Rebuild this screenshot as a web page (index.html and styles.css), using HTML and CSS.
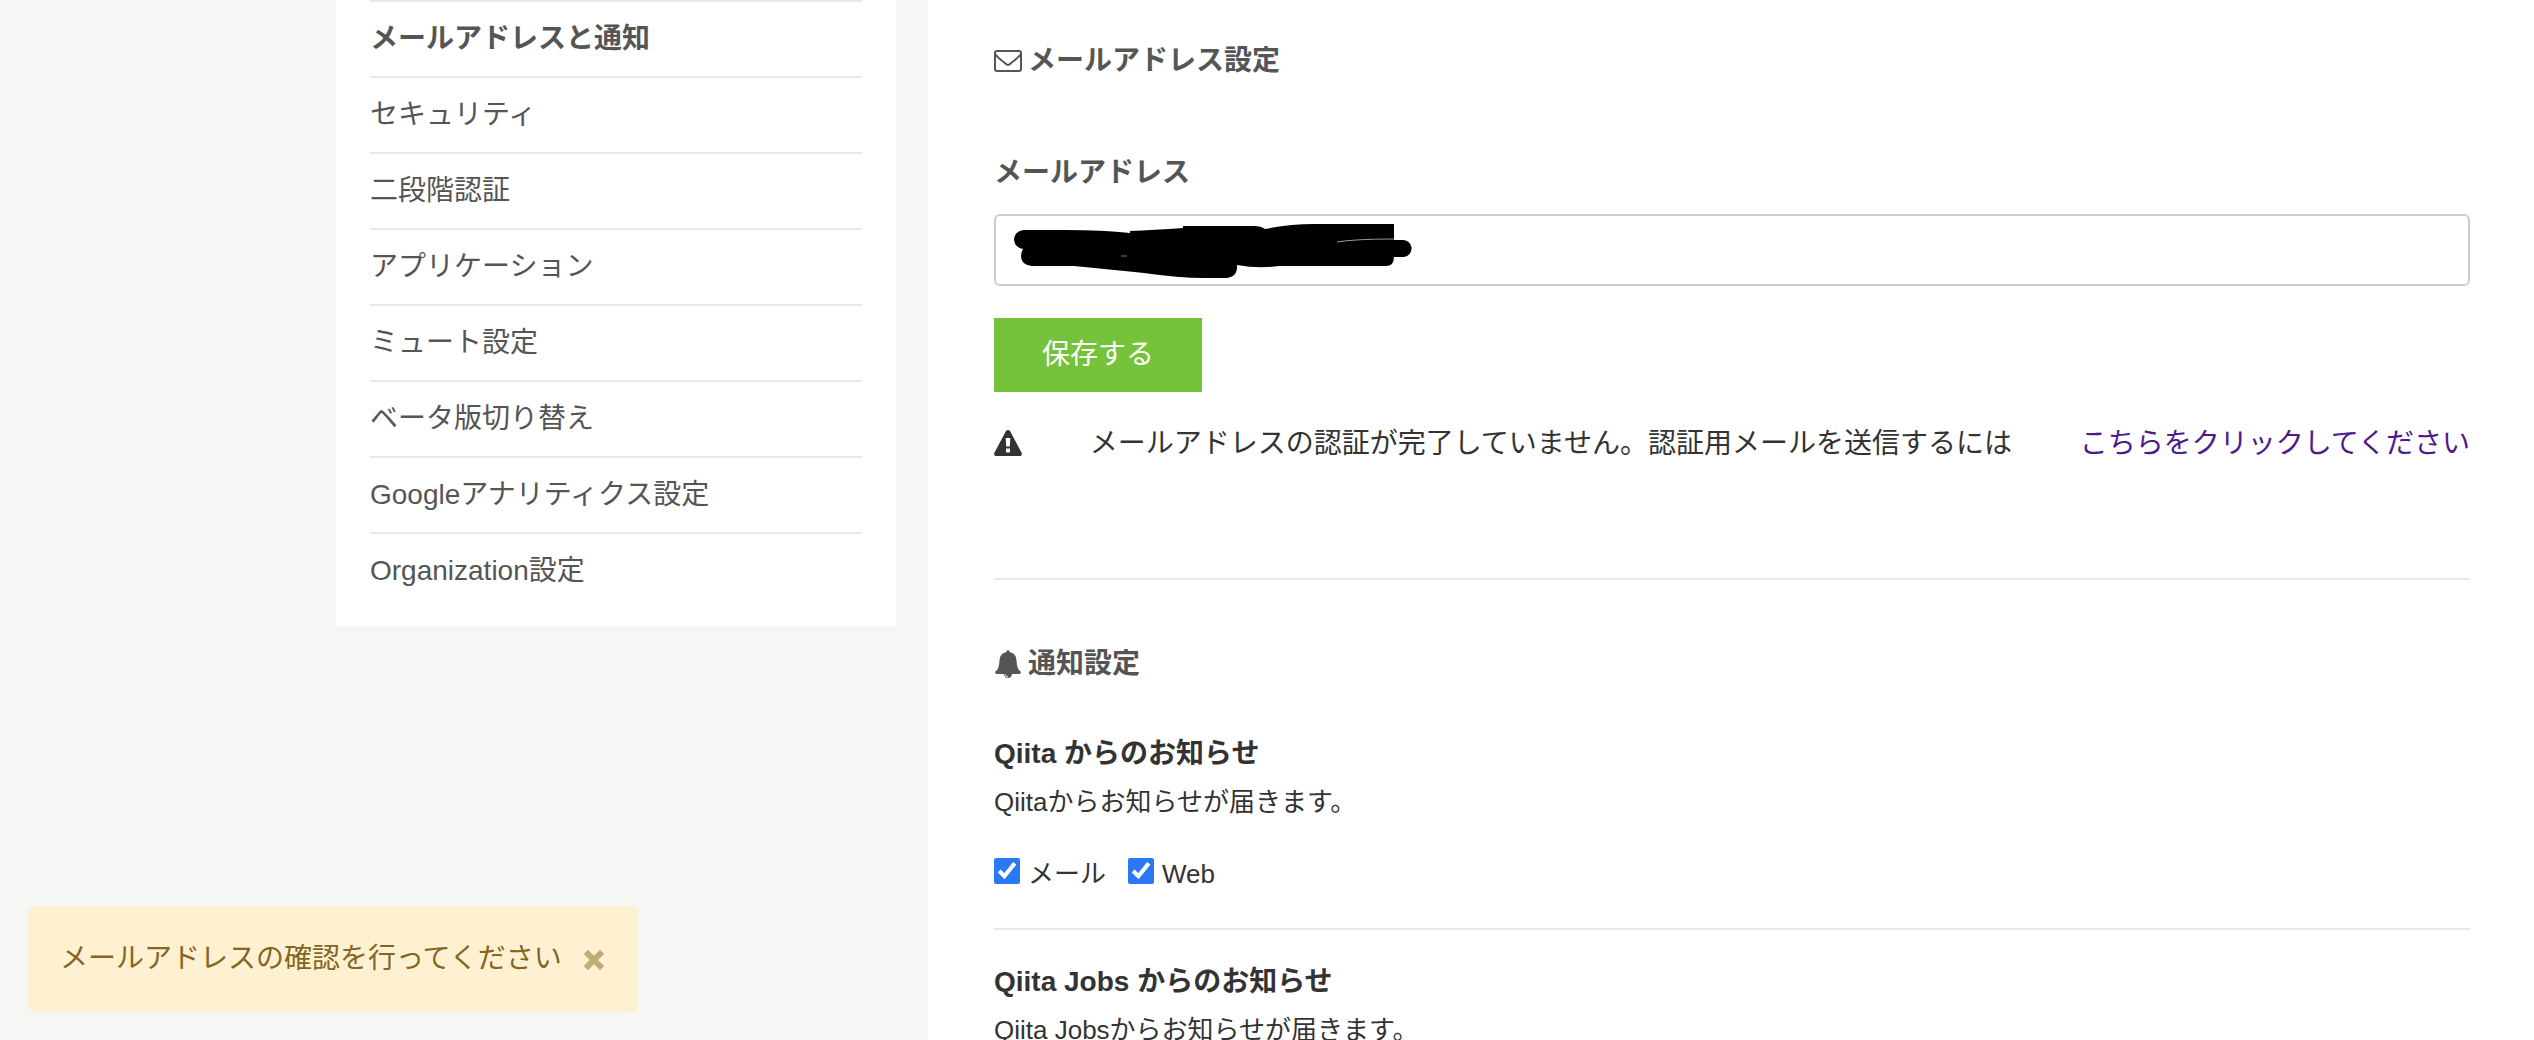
FILE: index.html
```html
<!DOCTYPE html>
<html lang="ja">
<head>
    <meta charset="utf-8">
    <title>メールアドレスと通知 - Qiita</title>
    <link rel="stylesheet" href="styles.css">
</head>
<body>
    <div class="page">
        <nav class="sidebar">
            <ul class="menu">
                <li><a href="#" class="active">メールアドレスと通知</a></li>
                <li><a href="#">セキュリティ</a></li>
                <li><a href="#">二段階認証</a></li>
                <li><a href="#">アプリケーション</a></li>
                <li><a href="#">ミュート設定</a></li>
                <li><a href="#">ベータ版切り替え</a></li>
                <li><a href="#">Googleアナリティクス設定</a></li>
                <li><a href="#">Organization設定</a></li>
            </ul>
        </nav>
        <main class="content">
            <section class="email">
                <h2 class="section-title">
                    <svg class="icon" viewBox="0 0 28 28" fill="none" stroke="currentColor" stroke-width="2">
                        <rect x="1" y="4" width="26" height="20" rx="2"/>
                        <path d="M1 7C3 10 6 12 9 14.500C11 16 12.500 18 14 18C15.500 18 17 16 19 14.500C22 12 25 10 27 7"/>
                    </svg>
                    メールアドレス設定
                </h2>
                <form>
                    <label class="field-label" for="email">メールアドレス</label>
                    <div class="field">
                        <input type="email" id="email" class="text-input">
                        <svg class="redaction" viewBox="0 0 400 56" width="400" height="56">
                            <path d="M10 6H50Q90 6 116 9V7Q140 6 169 4V2H240Q247 2 251 5Q275 0 300 0H380V16H388A8 8 0 0 1 390 33H380Q380 42 372 42H265Q245 45 223 41Q224 54 210 54H190Q165 54 130 49Q90 45 60 42H18Q7 41 7 32Q7 28 9 25Q0 23 0 15Q1 7 10 6Z"/>
                            <path d="M323 18Q340 15 380 15" fill="none" stroke="#999"/>
                            <path d="M107 32L113 32" fill="none" stroke="#777"/>
                        </svg>
                    </div>
                    <button type="submit" class="btn">保存する</button>
                </form>
                <div class="warning">
                    <svg class="icon" viewBox="0 0 28 28">
                        <path fill="currentColor" fill-rule="evenodd" d="M14 0Q15.200 0 16 1L27.700 23Q28.500 26 26 26H2Q-.5 26 .3 23L12 1Q12.800 0 14 0ZM11.700 8L12.200 16.500H15.800L16.300 8ZM12 18.500V22.500H16V18.500Z"/>
                    </svg>
                    <span>メールアドレスの認証が完了していません。認証用メールを送信するには</span>
                    <a href="#">こちらをクリックしてください</a>
                </div>
            </section>
            <section class="notifications">
                <h2 class="section-title">
                    <svg class="icon" viewBox="0 0 28 28" fill="currentColor">
                        <path d="M14 0Q15.500 0 15.500 2Q22 3.500 22.500 10Q22.500 19 27 22Q27 24 25 24H18Q17.500 28 14 28Q10.500 28 10 24H3Q1 24 1 22Q5.500 19 5.500 10Q6 3.500 12.500 2Q12.500 0 14 0Z"/>
                        <path d="M11.500 24.500Q11.800 26.700 14 27" fill="none" stroke="#fff" stroke-width="1"/>
                    </svg>
                    通知設定
                </h2>
                <div class="notice">
                    <h3>Qiita からのお知らせ</h3>
                    <p>Qiitaからお知らせが届きます。</p>
                    <div class="checks">
                        <label><input type="checkbox" checked>メール</label>
                        <label><input type="checkbox" checked>Web</label>
                    </div>
                </div>
                <div class="notice">
                    <h3>Qiita Jobs からのお知らせ</h3>
                    <p>Qiita Jobsからお知らせが届きます。</p>
                </div>
            </section>
        </main>
    </div>
    <div class="toast">
        <span>メールアドレスの確認を行ってください</span>
        <button type="button" class="toast-close" aria-label="閉じる">
            <svg viewBox="0 0 20 20" width="20" height="20">
                <path d="M4 4L16 16M16 4L4 16" stroke="currentColor" stroke-width="6" stroke-linecap="square"/>
            </svg>
        </button>
    </div>
</body>
</html>
```
FILE: styles.css
```css
* {
    box-sizing: border-box;
}
body {
    margin: 0;
    height: 100vh;
    overflow: hidden;
    background: #f6f6f4;
    color: #333;
    font-family: "Liberation Sans", "Noto Sans CJK JP", sans-serif;
    font-size: 28px;
    line-height: 40px;
}
h2, h3, p, ul {
    margin: 0;
    padding: 0;
}
.page {
    display: flex;
    align-items: flex-start;
    gap: 32px;
    padding-left: 336px;
}
.sidebar {
    flex: 0 0 560px;
    padding: 0 34px 18px;
    background: #fff;
}
.menu {
    list-style: none;
}
.menu li {
    border-top: 2px solid #e8e8e8;
    padding: 17px 0;
}
.menu a {
    display: block;
    color: #555;
    text-decoration: none;
}
.menu .active {
    font-weight: bold;
}
.content {
    flex: 1;
    min-height: 100vh;
    padding: 41px 64px 0 66px;
    background: #fff;
}
.section-title {
    display: flex;
    align-items: center;
    gap: 6px;
    color: #555;
    font-size: 28px;
}
.icon {
    flex: none;
    width: 28px;
    height: 28px;
}
.email {
    padding-bottom: 114px;
    border-bottom: 2px solid #e8e8e8;
}
.field-label {
    display: block;
    margin: 72px 0 21px;
    color: #555;
    font-weight: bold;
}
.field {
    position: relative;
}
.text-input {
    display: block;
    width: 100%;
    height: 72px;
    padding: 0 20px;
    border: 2px solid #ccc;
    border-radius: 6px;
    background: #fff;
    font: inherit;
}
.redaction {
    position: absolute;
    top: 10px;
    left: 20px;
}
.btn {
    display: block;
    margin: 32px 0;
    padding: 17px 48px;
    border: none;
    background: #74c33a;
    color: #fff;
    font: inherit;
    cursor: pointer;
}
.warning {
    display: flex;
    align-items: center;
    justify-content: space-between;
}
.warning a {
    color: #4c1a8b;
    text-decoration: none;
}
.notifications {
    padding-top: 64px;
}
.notice {
    padding: 50px 0 34px;
    border-bottom: 2px solid #e8e8e8;
}
.notice + .notice {
    padding-top: 32px;
}
.notice h3 {
    font-size: 28px;
}
.notice p {
    margin-top: 8px;
    font-size: 26px;
}
.checks {
    display: flex;
    gap: 22px;
    margin-top: 32px;
    font-size: 26px;
}
.checks label {
    display: flex;
    align-items: center;
    gap: 8px;
}
.checks input {
    width: 26px;
    height: 26px;
    margin: 0 0 6px;
    accent-color: #2b78f6;
}
.toast {
    position: fixed;
    left: 28px;
    bottom: 28px;
    display: flex;
    align-items: center;
    gap: 22px;
    padding: 33px 34px 33px 32px;
    border-radius: 6px;
    background: #fdf1d2;
    color: #85651f;
}
.toast-close {
    display: flex;
    padding: 2px 0 0;
    border: none;
    background: none;
    color: #c1ab78;
    cursor: pointer;
}
```
